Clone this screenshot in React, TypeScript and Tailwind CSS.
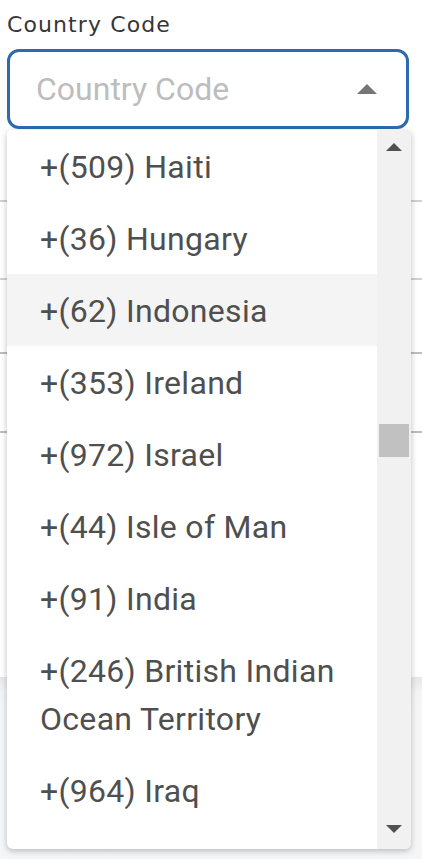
import React from "react";

const items: { label: string; hl?: boolean }[] = [
  { label: "+(509) Haiti" },
  { label: "+(36) Hungary" },
  { label: "+(62) Indonesia", hl: true },
  { label: "+(353) Ireland" },
  { label: "+(972) Israel" },
  { label: "+(44) Isle of Man" },
  { label: "+(91) India" },
  { label: "+(246) British Indian Ocean Territory" },
  { label: "+(964) Iraq" },
  { label: "+(98) Iran" },
];

export default function App() {
  return (
    <div className="relative w-[422px] h-[859px] overflow-hidden bg-white" style={{ fontFamily: "Roboto, sans-serif" }}>
      <div className="flex flex-col h-full">
        <div className="px-[7px] pt-[10px]">
          <div className="text-[22px] leading-[30px] tracking-[1.1px] text-[#363636]" style={{ fontFamily: "'DejaVu Sans', sans-serif" }}>
            Country Code
          </div>
          <div className="mt-[9px] h-[80px] w-[402px] rounded-[12px] border-[3px] border-[#2e6aae] flex items-center pl-[26px] pr-[29px]">
            <span className="flex-1 text-[32px] text-[#bdbdbd]">Country Code</span>
            <svg width="20" height="10" viewBox="0 0 20 10"><path d="M0 10 L10 0 L20 10 Z" fill="#757575" /></svg>
          </div>
        </div>
        <div className="flex flex-col">
          <div className="h-[71px]" />
          <div className="h-[2px] bg-[#cdd1d6]" />
          <div className="h-[76px]" />
          <div className="h-[2px] bg-[#cdd1d6]" />
          <div className="h-[72px]" />
          <div className="h-[2px] bg-[#bdbdbd]" />
          <div className="h-[77px]" />
          <div className="h-[2px] bg-[#bdbdbd]" />
        </div>
        <div className="mt-auto h-[182px] bg-gradient-to-b from-[#e6e7ea] via-[#f3f4f6] to-[#f5f6f8] bg-[length:100%_30px] bg-no-repeat bg-[#f5f6f8]" />
      </div>

      <div className="absolute left-[7px] top-[130px] w-[404px] h-[719px] bg-white rounded-b-[6px] rounded-t-[4px] shadow-[0_2px_6px_rgba(0,0,0,0.25)] flex overflow-hidden">
        <div className="flex-1 overflow-hidden">
          {items.map((it) => (
            <div
              key={it.label}
              className={`pl-[33px] pr-[10px] pt-[13px] pb-[11px] text-[32px] leading-[48px] tracking-[0.3px] text-[#4f4f4f] ${it.hl ? "bg-[#f4f4f4]" : ""}`}
            >
              {it.label}
            </div>
          ))}
        </div>
        <div className="w-[34px] bg-[#f1f1f1] flex flex-col items-center relative">
          <div className="pt-[13px]">
            <svg width="16" height="8" viewBox="0 0 16 8"><path d="M0 8 L8 0 L16 8 Z" fill="#505050" /></svg>
          </div>
          <div className="absolute left-[2px] top-[294px] w-[30px] h-[33px] bg-[#c1c1c1]" />
          <div className="mt-auto pb-[16px]">
            <svg width="16" height="8" viewBox="0 0 16 8"><path d="M0 0 L16 0 L8 8 Z" fill="#505050" /></svg>
          </div>
        </div>
      </div>
    </div>
  );
}
